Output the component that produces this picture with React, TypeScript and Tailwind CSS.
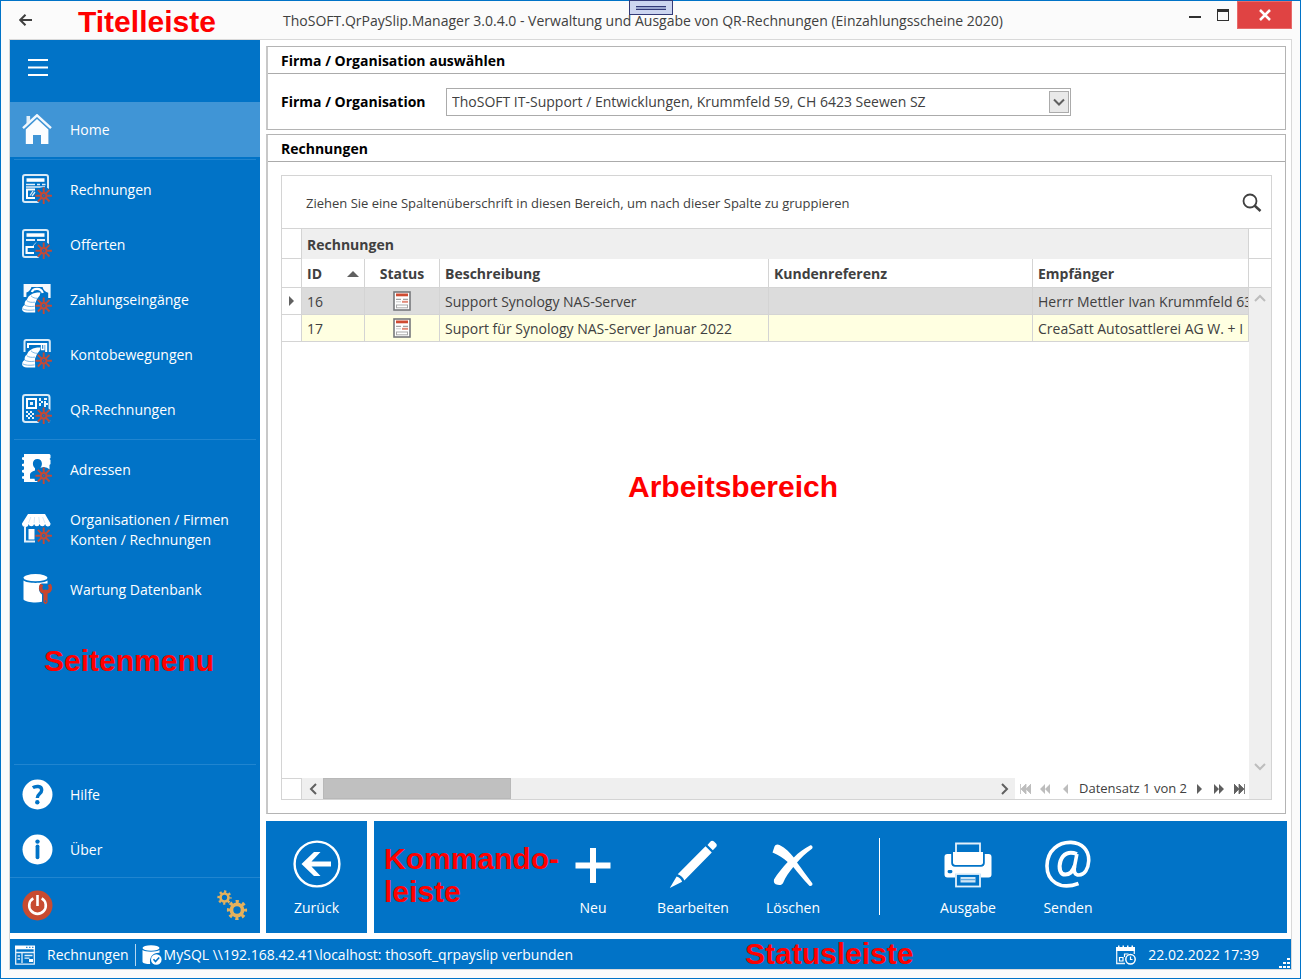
import type { ReactNode } from "react";

/* ---------- icons ---------- */

function Icon({ size = 31, children }: { size?: number; children: ReactNode }) {
  return (
    <svg width={size} height={size} viewBox={`0 0 ${size} ${size}`} fill="none" className="shrink-0" aria-hidden="true">
      {children}
    </svg>
  );
}

// red eight-pointed star in the lower right corner of most menu icons
function Burst() {
  return (
    <g>
      <circle cx="21.7" cy="21.7" r="8.6" fill="#0173c7" />
      <path
        d="M21.7 13.5v5.5M21.7 24.4v5.5M13.5 21.7H19M24.4 21.7h5.5M15.9 15.9l3.9 3.9M23.6 23.6l3.9 3.9M27.5 15.9l-3.9 3.9M19.8 23.6l-3.9 3.9"
        stroke="#c04a38"
        strokeWidth="1.9"
      />
      <circle cx="21.7" cy="21.7" r="2.8" stroke="#c04a38" strokeWidth="2" />
      <circle cx="21.7" cy="21.7" r=".8" fill="#c04a38" />
    </g>
  );
}

function HomeIcon() {
  return (
    <Icon>
      <path d="M4.5 2h3.6v4.4l-3.6 3.5z" fill="#fff" opacity=".85" />
      <path d="M1 14.2 15 1.3l14 12.9" stroke="#f2f8fd" strokeWidth="2.4" />
      <path d="M15 5 3.8 15.600V30H11V21h8v9h7.4V15.600z" fill="#fbfdff" />
    </Icon>
  );
}

function InvoiceIcon() {
  return (
    <Icon>
      <rect x="1" y="1" width="25" height="27" rx="2" stroke="#d8eaf7" strokeWidth="2" />
      <path d="M4.5 4.300h18v3.500h-18z" fill="#fff" />
      <path d="M4 10.600h9M15 10.600h3M20 10.600h3.500M4 13h19" stroke="#e3f0fa" strokeWidth="1.500" />
      <path d="M13 15.500H5V24h8" stroke="#fff" strokeWidth="2" />
      <path d="M8 21.500 11 17M10 22l3-4" stroke="#d8eaf7" strokeWidth="1.300" />
      <Burst />
    </Icon>
  );
}

function OfferIcon() {
  return (
    <Icon>
      <rect x="1" y="1" width="25" height="27" rx="2" stroke="#d8eaf7" strokeWidth="2" />
      <path d="M4.5 4.300h18v3.500h-18z" fill="#fff" />
      <path d="M4 11h9M15 11h8" stroke="#e3f0fa" strokeWidth="2" />
      <path d="M14 13.500 11 17" stroke="#9fcbec" />
      <path d="M12 18H4.600v6H12" stroke="#fff" strokeWidth="2.200" />
      <Burst />
    </Icon>
  );
}

function Coins() {
  return (
    <g>
      <path d="M5 15.500C6.500 11 11 8.300 18.500 8.500l-.8 3L15 15l-2 5 .2 8.500H5c-3.500 0-5.500-1.800-4.800-4 .2-1.800 1.400-3 2.600-3.500-.6-2 .4-4.500 2.200-5.500z" fill="#fff" />
      <path d="M9 11.800c2 2 4 2.600 6.500 2.400M4.700 16.600c2 1.700 5 2.100 8.300 1.500M2.700 21c2.400 1.600 6 1.900 10 1.200M.6 24.800c2.600 1.500 6.800 1.800 12 1.100" stroke="#5aa5dd" strokeWidth=".8" />
    </g>
  );
}

function IncomingIcon() {
  return (
    <Icon>
      <path d="M1.600 0h27v14h-2.400V8.800C23.600 8 21 5.800 20.600 3H9.400C9 5.400 7 7.600 4.400 8.600V13H1.600z" fill="#f4f9fd" />
      <path d="M9.800 8c1.400-4 9-4.800 11 1" stroke="#fff" strokeWidth="2.200" />
      <Coins />
      <Burst />
    </Icon>
  );
}

function AccountIcon() {
  return (
    <Icon>
      <path d="M2.500 13V2.700C2.500 1.600 3 1 4.200 1H26c1.200 0 1.800.6 1.800 1.700V13" stroke="#d8eaf7" strokeWidth="2" />
      <path d="M6 9V5h18.200v8" stroke="#fff" strokeWidth="2" />
      <path d="M19.500 6v4.500h2.400V6" stroke="#fff" strokeWidth="1.400" />
      <Coins />
      <Burst />
    </Icon>
  );
}

function QrIcon() {
  return (
    <Icon>
      <rect x="1" y="1" width="26.500" height="27" rx="2.400" stroke="#d8eaf7" strokeWidth="2" />
      <rect x="5" y="5" width="9" height="9" stroke="#fff" strokeWidth="2" />
      <path d="M8 8h3v3H8zM17 4h2v3h2v2h-2v3h-2V9h2V7h-2zM22 4h3v2h-3zM22 7h2v2h2v2h-2v2h-2zM4 17h2v2H4zM8 17h2v2H8zM6 19h2v2H6zM10 19h2v2h-2zM4 21h2v2H4zM8 21h2v2H8zM6 23h2v2H6zM10 23h2v2h-2z" fill="#eaf4fb" />
      <Burst />
    </Icon>
  );
}

function AddressIcon() {
  return (
    <Icon>
      <path d="M2 0h25.500l1 1v3l-1 1 1 1v4l-1 1v17H2v-3L0 24.500v-2L2 22v-3l-2-.8v-2l2-.7v-3L0 12v-2l2-.6V6.200L0 5.500V3.600L2 3z" fill="#fff" />
      <path d="M15.400 5c2.800 0 4.500 1.800 4.500 4.600 0 2-.7 3.500-1.700 4.600v2.200l5 2.100V27H13l-.5-2.200H8v-4.200c0-2.100 2-3 5-4.200v-2.200c-1.300-1.100-2.100-2.600-2.100-4.600C10.900 6.800 12.600 5 15.400 5z" fill="#0173c7" />
      <Burst />
    </Icon>
  );
}

function ShopIcon() {
  return (
    <Icon>
      <path d="M6 0h17l5.500 9.500a2.600 2.600 0 0 1-5.400.6 2.800 2.800 0 0 1-5.500 0 2.800 2.800 0 0 1-5.500 0 2.800 2.800 0 0 1-5.500 0A3.100 3.100 0 0 1 0 9.500z" fill="#fff" />
      <path d="M8.800 3 6.600 9M12.600 3l-.5 6M16.800 3l.7 6M20.600 3 23 9" stroke="#bcdaf1" strokeWidth=".6" />
      <path d="M3 13v14.500h10" stroke="#e3f0fa" strokeWidth="2" />
      <path d="M6.500 15h6v10.500h-6z" fill="#fff" />
      <Burst />
    </Icon>
  );
}

function DatabaseIcon() {
  return (
    <Icon>
      <ellipse cx="13.500" cy="3.700" rx="12" ry="3.600" fill="#fff" />
      <path d="M1.500 6.500c3.500 3.200 20.500 3.200 24 0v3h-6C16 12 16 17 20 20.500v7.300c-6 1.300-16 .6-18.500-2.300z" fill="#fff" />
      <path d="M19.700 10.500c-2.200 3.800-.8 7.500 3.800 7.500s6-3.700 3.800-7.500" stroke="#c8452e" strokeWidth="3.400" />
      <path d="M23.500 17.500v10.300" stroke="#c8452e" strokeWidth="4.200" strokeLinecap="round" />
      <path d="M23.500 26.500v1.600" stroke="#0173c7" strokeWidth="1.400" />
    </Icon>
  );
}

function HelpIcon() {
  return (
    <Icon>
      <circle cx="15.500" cy="15.500" r="15" fill="#fff" />
      <path d="M10.800 8.700c2.600-1.700 8.900-2.300 8.900 2.300 0 3.900-4.400 3.600-4.400 8.100" stroke="#0173c7" strokeWidth="3.400" />
      <circle cx="15.300" cy="23.200" r="2.200" fill="#0173c7" />
    </Icon>
  );
}

function InfoIcon() {
  return (
    <Icon>
      <circle cx="15.500" cy="15.500" r="15" fill="#fff" />
      <circle cx="15.500" cy="7.600" r="2.200" fill="#0173c7" />
      <path d="M15.500 12.300v11" stroke="#0173c7" strokeWidth="3.800" strokeLinecap="round" />
    </Icon>
  );
}

function PowerIcon() {
  return (
    <Icon>
      <circle cx="15.500" cy="15.500" r="15" fill="#c84b31" />
      <path d="M11.300 8.400a8.300 8.300 0 1 0 8.400 0M15.500 5v11" stroke="#fff" strokeWidth="2.600" />
    </Icon>
  );
}

// two rings: the body and the eight teeth, drawn as a dashed circle
function Gear({ cx, cy, r }: { cx: number; cy: number; r: number }) {
  return (
    <g stroke="#e5b15c">
      <circle cx={cx} cy={cy} r={r * 0.54} strokeWidth={r * 0.36} />
      <circle cx={cx} cy={cy} r={r * 0.8} strokeWidth={r * 0.36} strokeDasharray={`${r * 0.3} ${r * 0.3283}`} strokeDashoffset={r * 0.15} />
    </g>
  );
}

function GearsIcon() {
  return (
    <Icon>
      <Gear cx={7.5} cy={7.5} r={7.3} />
      <Gear cx={20} cy={20} r={10.3} />
    </Icon>
  );
}

function BackCircleIcon() {
  return (
    <Icon size={48}>
      <circle cx="24" cy="24" r="22.400" stroke="#fff" strokeWidth="2.400" />
      <path d="M8.500 24 21 12h6.500l-9 9.500H38v5H18.500l9 9.500H21z" fill="#fff" />
    </Icon>
  );
}

function PlusIcon() {
  return (
    <Icon size={48}>
      <path d="M24 8v35M6.500 25.500h35" stroke="#fff" strokeWidth="6" />
    </Icon>
  );
}

function PencilIcon() {
  return (
    <Icon size={48}>
      <path d="m38.500 5 3-3.600c1-1 2.500-.8 3.500.2l2 2c1 1 1 2.500 0 3.500l-3.200 3.200zM36.500 6.200l6.300 6.300-27.500 28c-.8-2.800-3.600-5.500-6.600-6.300zM7.600 36.400c2.700.6 4.800 2.700 5.500 5.400L.8 48z" fill="#fff" />
    </Icon>
  );
}

function DeleteIcon() {
  return (
    <Icon size={48}>
      <path d="M3.500 12.500 5.500 6.500c.7-2 3-2.600 5-1.500 6 3.200 10.500 7.600 14.300 12.500C30 12.300 35 8.500 41 5.500c1.800-.9 3.500 2 2 3.200C36.500 13.500 31.700 18 28 22.500c5.300 7 10 14 15.300 20.700 1 1.700-1.700 3.800-3.200 2.300C34 39 29 33 24.300 27c-4 5-7.800 10-10.100 15.700-1.200 2.700-4.300 2.800-7.500 1.500-2-.8-2-2.600-1.700-4.600C8.500 33.500 13.500 27.700 18.700 22 14.500 18 9.500 15 3.500 12.500z" fill="#fff" />
    </Icon>
  );
}

function PrinterIcon() {
  return (
    <Icon size={48}>
      <path d="M12 13V3.500h24V13" stroke="#e3f0fa" strokeWidth="1.800" />
      <path d="M9 12h30v10.500c0 1.500-1 2.500-2.500 2.500h-25C10 25 9 24 9 22.500z" fill="#fff" />
      <path d="M7.200 14H3.400C1.500 14 .5 15 .5 17v17.500c0 2 1 3 3 3H11V34h26v3.500h7.500c2 0 3-1 3-3V17c0-2-1-3-3-3h-3.700v9c0 2.300-1.500 3.700-3.800 3.700H11c-2.300 0-3.800-1.400-3.800-3.700z" fill="#fff" />
      <rect x="3.600" y="30" width="4.800" height="3.200" rx="1.400" fill="#0173c7" />
      <rect x="12" y="34" width="24" height="12.500" fill="#0173c7" stroke="#e3f0fa" strokeWidth="1.800" />
      <path d="M16.500 37h15v5.500h-15z" fill="#cfe5f5" />
      <path d="M16.500 39.700h15" stroke="#3f94d5" strokeWidth=".9" />
    </Icon>
  );
}

function AtIcon() {
  return (
    <Icon size={48}>
      <path d="M34.500 43.500C16 50.500 2.600 41 3 25.500 3.400 10.500 14.500 2 27 2.400c11 .4 18.200 7.800 17.700 18.600-.4 8-4.200 14-9.700 14-4 0-5.400-3-4.500-8.500l2.400-12.500" stroke="#fff" strokeWidth="3.600" />
      <path d="M33 14c-8-3-14-.5-16.500 7-2.400 7.700 0 13.600 4.800 13.600 4 0 7.500-3.200 9.300-8.600" stroke="#fff" strokeWidth="4" />
    </Icon>
  );
}

function StatusIcon() {
  return (
    <svg width="18" height="20" viewBox="0 0 18 20" fill="none" className="mx-auto block" role="img" aria-label="Rechnung">
      <rect x="1" y="1" width="16" height="18" fill="#fff" stroke="#77797c" strokeWidth="1.600" />
      <path d="M3 2.500h12v2.800H3z" fill="#cf4b32" />
      <path d="M3 8.300h5M10 8.300h5" stroke="#8b8b8b" />
      <path d="M3 10.800h5" stroke="#c9c9c9" />
      <path d="M9 10.800h6" stroke="#e08a79" strokeWidth="2" />
      <rect x="3.500" y="14" width="11" height="2.800" stroke="#a8a8a8" />
    </svg>
  );
}

function FormIcon() {
  return (
    <Icon size={20}>
      <path d="M0 .5h20v3.800H0z" fill="#fff" />
      <path d="M11 2.300h1.500M14 2.300h1.500M17 2.300h1.500" stroke="#0173c7" />
      <path d="M.7 4v15.200h18.600V4M1 7.500h18M7 8v10" stroke="#e3f0fa" strokeWidth="1.300" />
      <path d="M2.500 11h2.500M2.500 14h2.500M9.500 10.500h8M9.500 13.200h5" stroke="#e3f0fa" strokeWidth="1.300" />
      <path d="M14 14h4v3h-4z" fill="#fff" />
    </Icon>
  );
}

function DbCheckIcon() {
  return (
    <Icon size={20}>
      <ellipse cx="9" cy="3" rx="8.500" ry="2.800" fill="#fff" />
      <path d="M.5 5c3 2.200 14 2.200 17 0v2.800C11 7.500 7 12 8.200 19 4 19 1.200 18.500.5 17z" fill="#fff" />
      <circle cx="14.300" cy="14.500" r="5.300" fill="#fff" />
      <path d="m11.500 14.300 2 2.200 3.700-4" stroke="#0173c7" strokeWidth="1.600" />
    </Icon>
  );
}

function CalendarIcon() {
  return (
    <Icon size={20}>
      <path d="M0 2h2V.5h1.500V2h3V.5H8V2h3V.5h1.500V2h3V.5H17V2h2v4H0z" fill="#fff" />
      <path d="M.7 6v12.500H9M18.300 6v3" stroke="#e3f0fa" strokeWidth="1.300" />
      <path d="M3.500 12.500H7V16H3.500zM8.500 12V9h4" stroke="#fff" strokeWidth="1.200" />
      <circle cx="14.500" cy="14.300" r="4.700" stroke="#fff" strokeWidth="1.500" />
      <path d="M14.500 11.500v3h2" stroke="#fff" strokeWidth="1.200" />
    </Icon>
  );
}

/* ---------- data ---------- */

const documents = [
  { label: "Rechnungen", icon: <InvoiceIcon /> },
  { label: "Offerten", icon: <OfferIcon /> },
  { label: "Zahlungseingänge", icon: <IncomingIcon /> },
  { label: "Kontobewegungen", icon: <AccountIcon /> },
  { label: "QR-Rechnungen", icon: <QrIcon /> },
];

const rows = [
  { id: 16, text: "Support Synology NAS-Server", to: "Herrr Mettler Ivan Krummfeld 63", selected: true },
  { id: 17, text: "Suport für Synology NAS-Server Januar 2022", to: "CreaSatt Autosattlerei AG W. + I", selected: false },
];

const pagerPaths = {
  first: "M.5 0v10M6 0v10L1 5zM11 0v10L6 5z",
  fastBack: "M5 0v10L0 5zM10 0v10L5 5z",
  back: "M5 0v10L0 5z",
  next: "M0 0v10l5-5z",
  fastNext: "M0 0v10l5-5zM5 0v10l5-5z",
  last: "M0 0v10l5-5zM5 0v10l5-5zM10.500 0v10",
};

/* ---------- parts ---------- */

function Note({ className, children }: { className: string; children: ReactNode }) {
  return (
    <span className={`pointer-events-none absolute font-['Liberation_Sans',sans-serif] text-[30px] leading-[33px] font-bold whitespace-nowrap text-[#ff0000] ${className}`}>
      {children}
    </span>
  );
}

function MenuItem({ label, icon, active, tall }: { label: ReactNode; icon: ReactNode; active?: boolean; tall?: boolean }) {
  return (
    <button
      type="button"
      className={`flex w-full items-center gap-[17px] pl-3 text-left leading-5 ${tall ? "h-[65px]" : "h-[55px]"} ${active ? "bg-[#4095d6]" : ""}`}
    >
      {icon}
      <span>{label}</span>
    </button>
  );
}

function Separator() {
  return <div className="mx-1 my-0.5 h-px bg-[#2085d0]" />;
}

function Command({ label, icon }: { label: string; icon: ReactNode }) {
  return (
    <button type="button" className="flex w-[100px] flex-col items-center gap-2.5 pt-1 leading-5 text-white">
      {icon}
      <span>{label}</span>
    </button>
  );
}

function PagerButton({ label, kind, muted }: { label: string; kind: keyof typeof pagerPaths; muted?: boolean }) {
  const color = muted ? "#bdbdbd" : "#5f5f5f";
  return (
    <button type="button" aria-label={label} className="flex w-5 justify-center">
      <svg width="11" height="10" viewBox={kind === "back" || kind === "next" ? "-3 0 11 10" : "0 0 11 10"} aria-hidden="true">
        <path d={pagerPaths[kind]} fill={color} stroke={kind === "first" || kind === "last" ? color : "none"} strokeWidth=".8" />
      </svg>
    </button>
  );
}

function Chevron({ d, color = "#606060" }: { d: string; color?: string }) {
  return (
    <svg width="12" height="12" viewBox="0 0 12 12" fill="none" aria-hidden="true">
      <path d={d} stroke={color} strokeWidth="2" />
    </svg>
  );
}

function GroupBox({ title, className = "", children }: { title: string; className?: string; children: ReactNode }) {
  return (
    <section className={`flex flex-col border border-l-2 border-[#b4b4b4] border-l-[#c8c8c8] ${className}`}>
      <h2 className="h-[27px] border-b border-[#ababab] pl-[13px] leading-[27px] font-bold text-black">{title}</h2>
      {children}
    </section>
  );
}

function Sidebar() {
  return (
    <nav className="relative flex w-[250px] shrink-0 flex-col bg-[#0173c7] text-white">
      <button type="button" aria-label="Menü" className="flex h-[62px] items-start pt-[18px] pl-[18px]">
        <svg width="20" height="18" viewBox="0 0 20 18" aria-hidden="true">
          <path d="M0 2h20M0 9.500h20M0 17h20" stroke="#fff" strokeWidth="2" />
        </svg>
      </button>
      <MenuItem label="Home" icon={<HomeIcon />} active />
      <Separator />
      {documents.map((item) => (
        <MenuItem key={item.label} {...item} />
      ))}
      <Separator />
      <MenuItem label="Adressen" icon={<AddressIcon />} />
      <MenuItem label={<>Organisationen / Firmen<br />Konten / Rechnungen</>} icon={<ShopIcon />} tall />
      <MenuItem label="Wartung Datenbank" icon={<DatabaseIcon />} />
      <Note className="top-[604px] left-[34px]">Seitenmenu</Note>
      <div className="flex-1" />
      <Separator />
      <MenuItem label="Hilfe" icon={<HelpIcon />} />
      <MenuItem label="Über" icon={<InfoIcon />} />
      <div className="flex h-[56px] items-center justify-between border-t border-[#2085d0] pr-3 pl-3">
        <button type="button" aria-label="Beenden"><PowerIcon /></button>
        <button type="button" aria-label="Einstellungen"><GearsIcon /></button>
      </div>
    </nav>
  );
}

function InvoiceTable() {
  const head = "border-r border-[#d4d4d4] px-[5px] pt-0.5 text-left font-bold";
  return (
    <table className="w-full table-fixed border-separate border-spacing-0 text-[#404040]">
      <colgroup>
        <col className="w-5" />
        <col className="w-[63px]" />
        <col className="w-[75px]" />
        <col className="w-[329px]" />
        <col className="w-[264px]" />
        <col />
      </colgroup>
      <thead>
        <tr className="h-[30px]">
          <td className="border-r border-b border-[#d4d4d4]" />
          <th colSpan={5} scope="colgroup" className={`bg-[#efefef] ${head}`}>Rechnungen</th>
        </tr>
        <tr className="h-[29px]">
          <td className="border-r border-b border-[#d4d4d4]" />
          <th scope="col" aria-sort="ascending" className={`border-b ${head}`}>
            <span className="flex items-center justify-between">
              ID
              <svg width="12" height="6" viewBox="0 0 12 6" aria-hidden="true"><path d="M0 6l6-6 6 6z" fill="#606060" /></svg>
            </span>
          </th>
          <th scope="col" className="border-r border-b border-[#d4d4d4] pt-0.5 text-center font-bold">Status</th>
          <th scope="col" className={`border-b ${head}`}>Beschreibung</th>
          <th scope="col" className={`border-b ${head}`}>Kundenreferenz</th>
          <th scope="col" className={`border-b ${head}`}>Empfänger</th>
        </tr>
      </thead>
      <tbody>
        {rows.map((row) => {
          const cell = `overflow-hidden border-r border-b border-[#d4d4d4] pl-[5px] whitespace-nowrap ${row.selected ? "bg-[#dcdcdc]" : "bg-[#ffffe1]"}`;
          return (
            <tr key={row.id} className="h-[27px]">
              <td className="border-r border-b border-[#d4d4d4]">
                {row.selected && (
                  <svg width="5" height="10" viewBox="0 0 5 10" className="mx-auto block" aria-hidden="true"><path d="M0 0v10l5-5z" fill="#606060" /></svg>
                )}
              </td>
              <td className={`pt-0.5 ${cell}`}>{row.id}</td>
              <td className={`pr-[5px] ${cell}`}><StatusIcon /></td>
              <td className={`pt-0.5 ${cell}`}>{row.text}</td>
              <td className={cell} />
              <td className={`pt-0.5 ${cell}`}>{row.to}</td>
            </tr>
          );
        })}
      </tbody>
    </table>
  );
}

function DataGrid() {
  return (
    <div className="m-[13px] flex min-h-0 flex-1 flex-col border border-[#d4d4d4]">
      <div className="flex h-[53px] shrink-0 items-center justify-between border-b border-[#d4d4d4] pt-0.5 pr-2 pl-6">
        <span className="text-[13px] text-[#404040]">
          Ziehen Sie eine Spaltenüberschrift in diesen Bereich, um nach dieser Spalte zu gruppieren
        </span>
        <button type="button" aria-label="Suchen">
          <svg width="22" height="20" viewBox="0 0 22 20" fill="none" stroke="#404040" aria-hidden="true">
            <circle cx="9" cy="8" r="6.500" strokeWidth="1.800" />
            <path d="m13.500 12.500 6 5.500" strokeWidth="2.500" />
          </svg>
        </button>
      </div>
      <div className="flex min-h-0 flex-1">
        <div className="flex min-w-0 flex-1 flex-col">
          <InvoiceTable />
          <div className="flex-1" />
          <div className="flex h-[21px] items-stretch text-[#404040]">
            <div className="w-5 shrink-0 border-t border-r border-[#d4d4d4]" />
            <div className="flex min-w-0 flex-1 items-stretch bg-[#efefef]">
              <button type="button" aria-label="Nach links" className="flex w-[21px] items-center justify-center"><Chevron d="M9 1 4 6l5 5" /></button>
              <div className="flex-1"><div className="h-full w-[28%] border border-[#b8b8b8] bg-[#c0c0c0]" /></div>
              <button type="button" aria-label="Nach rechts" className="flex w-[21px] items-center justify-center"><Chevron d="m3 1 5 5-5 5" /></button>
            </div>
            <div className="flex shrink-0 items-center text-[13px]">
              <PagerButton label="Erster Datensatz" kind="first" muted />
              <PagerButton label="Vorherige Seite" kind="fastBack" muted />
              <PagerButton label="Vorheriger Datensatz" kind="back" muted />
              <span className="pr-0.5 pl-1">Datensatz 1 von 2</span>
              <PagerButton label="Nächster Datensatz" kind="next" />
              <PagerButton label="Nächste Seite" kind="fastNext" />
              <PagerButton label="Letzter Datensatz" kind="last" />
            </div>
          </div>
        </div>
        <div className="flex w-[22px] shrink-0 flex-col">
          <div className="h-[30px] border-b border-[#d4d4d4]" />
          <div className="h-[29px] border-b border-[#d4d4d4]" />
          <div className="flex flex-1 flex-col items-center justify-between bg-[#efefef] pt-1 pb-[26px]">
            <button type="button" aria-label="Nach oben"><Chevron d="m1 9 5-5 5 5" color="#bdbdbd" /></button>
            <button type="button" aria-label="Nach unten"><Chevron d="m1 3 5 5 5-5" color="#bdbdbd" /></button>
          </div>
        </div>
      </div>
    </div>
  );
}

export default function App() {
  return (
    <div className="flex h-screen flex-col border border-[#0173c7] bg-[#fbfbfb] font-['Open_Sans','Noto_Sans',sans-serif] text-sm">
      <header className="relative flex h-[38px] shrink-0 items-center pr-2 pl-[18px] text-[#404040]">
        <button type="button" aria-label="Zurück">
          <svg width="13" height="12" viewBox="0 0 13 12" fill="none" stroke="#404040" strokeWidth="2" aria-hidden="true">
            <path d="M6.500.7 1.200 6l5.300 5.300M1.500 6H13" />
          </svg>
        </button>
        <h1 className="ml-[251px] flex-1 pt-0.5 whitespace-nowrap">
          ThoSOFT.QrPaySlip.Manager 3.0.4.0 - Verwaltung und Ausgabe von QR-Rechnungen (Einzahlungsscheine 2020)
        </h1>
        <div className="flex h-7 items-center self-start">
          <button type="button" aria-label="Minimieren" className="flex w-7 justify-center pt-1">
            <span className="h-0.5 w-3 bg-[#303030]" />
          </button>
          <button type="button" aria-label="Maximieren" className="flex w-7 justify-center">
            <span className="h-3 w-3 border border-t-[3px] border-[#303030]" />
          </button>
          <button type="button" aria-label="Schliessen" className="flex h-7 w-[55px] items-center justify-center border border-[#e86a6a] bg-[#e04343]">
            <svg width="12" height="12" viewBox="0 0 12 12" aria-hidden="true"><path d="m1 1 10 10M11 1 1 11" stroke="#fff" strokeWidth="2.500" /></svg>
          </button>
        </div>
        {/* pull-down handle in the middle of the top edge */}
        <div className="absolute -top-px left-1/2 flex h-[15px] w-11 -translate-x-1/2 flex-col items-center justify-center border border-[#333a78] bg-[#ccd5f0]">
          <div className="h-1 w-[30px] border-y border-[#333a78] bg-[#9aa6cf]" />
        </div>
        <Note className="top-1 left-[77px]">Titelleiste</Note>
      </header>

      <div className="mx-2 mb-2 flex min-h-0 flex-1 flex-col border border-[#d9d9d9] bg-white">
        <div className="flex min-h-0 flex-1 gap-1.5">
          <Sidebar />
          <main className="flex min-w-0 flex-1 flex-col pt-1.5 pr-1">
            <GroupBox title="Firma / Organisation auswählen" className="mr-px h-[84px] shrink-0">
              <div className="flex flex-1 items-center pl-[13px]">
                <label htmlFor="firma" className="w-[165px] font-bold text-black">Firma / Organisation</label>
                <div className="relative w-[625px]">
                  <select id="firma" className="h-7 w-full appearance-none border border-[#ababab] bg-white pl-[5px] text-[#404040]">
                    <option>ThoSOFT IT-Support / Entwicklungen, Krummfeld 59, CH 6423 Seewen SZ</option>
                  </select>
                  <span className="pointer-events-none absolute top-[3px] right-0.5 flex h-[22px] w-5 items-center justify-center border border-[#ababab] bg-[#e9e9e9]">
                    <Chevron d="m1 3.500 5 5 5-5" />
                  </span>
                </div>
              </div>
            </GroupBox>

            <GroupBox title="Rechnungen" className="relative mt-1 mr-px min-h-0 flex-1">
              <DataGrid />
              <Note className="top-[335px] left-[360px]">Arbeitsbereich</Note>
            </GroupBox>

            <div className="mt-[7px] flex h-[112px] shrink-0 gap-[7px]">
              <div className="flex w-[101px] justify-center bg-[#0173c7] pt-[15px]">
                <Command label="Zurück" icon={<BackCircleIcon />} />
              </div>
              <div className="relative flex flex-1 justify-center bg-[#0173c7] pt-[15px]">
                <Note className="top-[21px] left-2.5">Kommando-<br />leiste</Note>
                <Command label="Neu" icon={<PlusIcon />} />
                <Command label="Bearbeiten" icon={<PencilIcon />} />
                <Command label="Löschen" icon={<DeleteIcon />} />
                <div className="mt-0.5 mr-[38px] ml-9 h-[77px] w-px bg-white" />
                <Command label="Ausgabe" icon={<PrinterIcon />} />
                <Command label="Senden" icon={<AtIcon />} />
              </div>
            </div>
          </main>
        </div>

        <footer className="relative mt-1.5 flex h-[30px] shrink-0 items-center bg-[#0173c7] pt-0.5 pr-8 pl-[5px] text-white">
          <FormIcon />
          <span className="ml-3">Rechnungen</span>
          <div className="mx-1.5 h-[22px] w-px bg-[#b5d7f0]" />
          <DbCheckIcon />
          <span className="ml-0.5 flex-1">MySQL \\192.168.42.41\localhost: thosoft_qrpayslip verbunden</span>
          <Note className="-top-0.5 left-[735px]">Statusleiste</Note>
          <CalendarIcon />
          <time dateTime="2022-02-22T17:39" className="ml-3">22.02.2022 17:39</time>
          <svg width="12" height="12" viewBox="0 0 12 12" className="absolute right-0 bottom-0" aria-hidden="true">
            <path d="M8 1h3v2H8zM4 5h3v2H4zM8 5h3v2H8zM0 9h3v2H0zM4 9h3v2H4zM8 9h3v2H8z" fill="#fff" />
          </svg>
        </footer>
      </div>
    </div>
  );
}
